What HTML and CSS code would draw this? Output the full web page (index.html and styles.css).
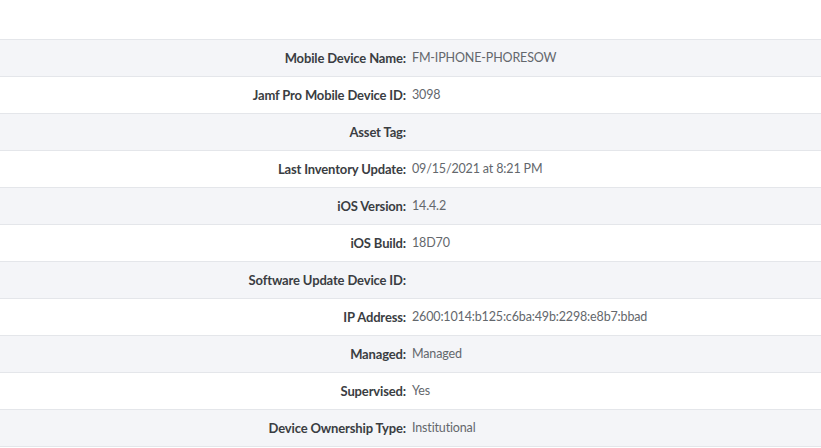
FILE: index.html
```html
<!DOCTYPE html>
<html>
<head>
<meta charset="utf-8">
<link rel="stylesheet" href="styles.css">
</head>
<body>
<div class="page">
  <div class="table">
    <div class="row alt"><div class="label">Mobile Device Name:</div><div class="value">FM-IPHONE-PHORESOW</div></div>
    <div class="row"><div class="label">Jamf Pro Mobile Device ID:</div><div class="value">3098</div></div>
    <div class="row alt"><div class="label">Asset Tag:</div><div class="value"></div></div>
    <div class="row"><div class="label">Last Inventory Update:</div><div class="value">09/15/2021 at 8:21 PM</div></div>
    <div class="row alt"><div class="label">iOS Version:</div><div class="value">14.4.2</div></div>
    <div class="row"><div class="label">iOS Build:</div><div class="value">18D70</div></div>
    <div class="row alt"><div class="label">Software Update Device ID:</div><div class="value"></div></div>
    <div class="row"><div class="label">IP Address:</div><div class="value">2600:1014:b125:c6ba:49b:2298:e8b7:bbad</div></div>
    <div class="row alt"><div class="label">Managed:</div><div class="value">Managed</div></div>
    <div class="row"><div class="label">Supervised:</div><div class="value">Yes</div></div>
    <div class="row alt"><div class="label">Device Ownership Type:</div><div class="value">Institutional</div></div>
  </div>
</div>
</body>
</html>
```
FILE: styles.css
```css
html, body {
  margin: 0;
  padding: 0;
  background: #ffffff;
}
.page {
  padding-top: 39px;
  font-family: Lato, "Liberation Sans", sans-serif;
  font-size: 13px;
}
.table {
  border-bottom: 1px solid #e4e6ea;
}
.row {
  display: grid;
  grid-template-columns: 406px 1fr;
  column-gap: 6px;
  align-items: center;
  height: 35px;
  padding-bottom: 1px;
  border-top: 1px solid #e4e6ea;
  background: #ffffff;
}
.row.alt {
  background: #f4f5f8;
}
.label {
  text-align: right;
  font-weight: 700;
  color: #3a3d42;
  letter-spacing: -0.15px;
}
.value {
  font-size: 12.5px;
  letter-spacing: -0.15px;
  color: #63676c;
}
```
